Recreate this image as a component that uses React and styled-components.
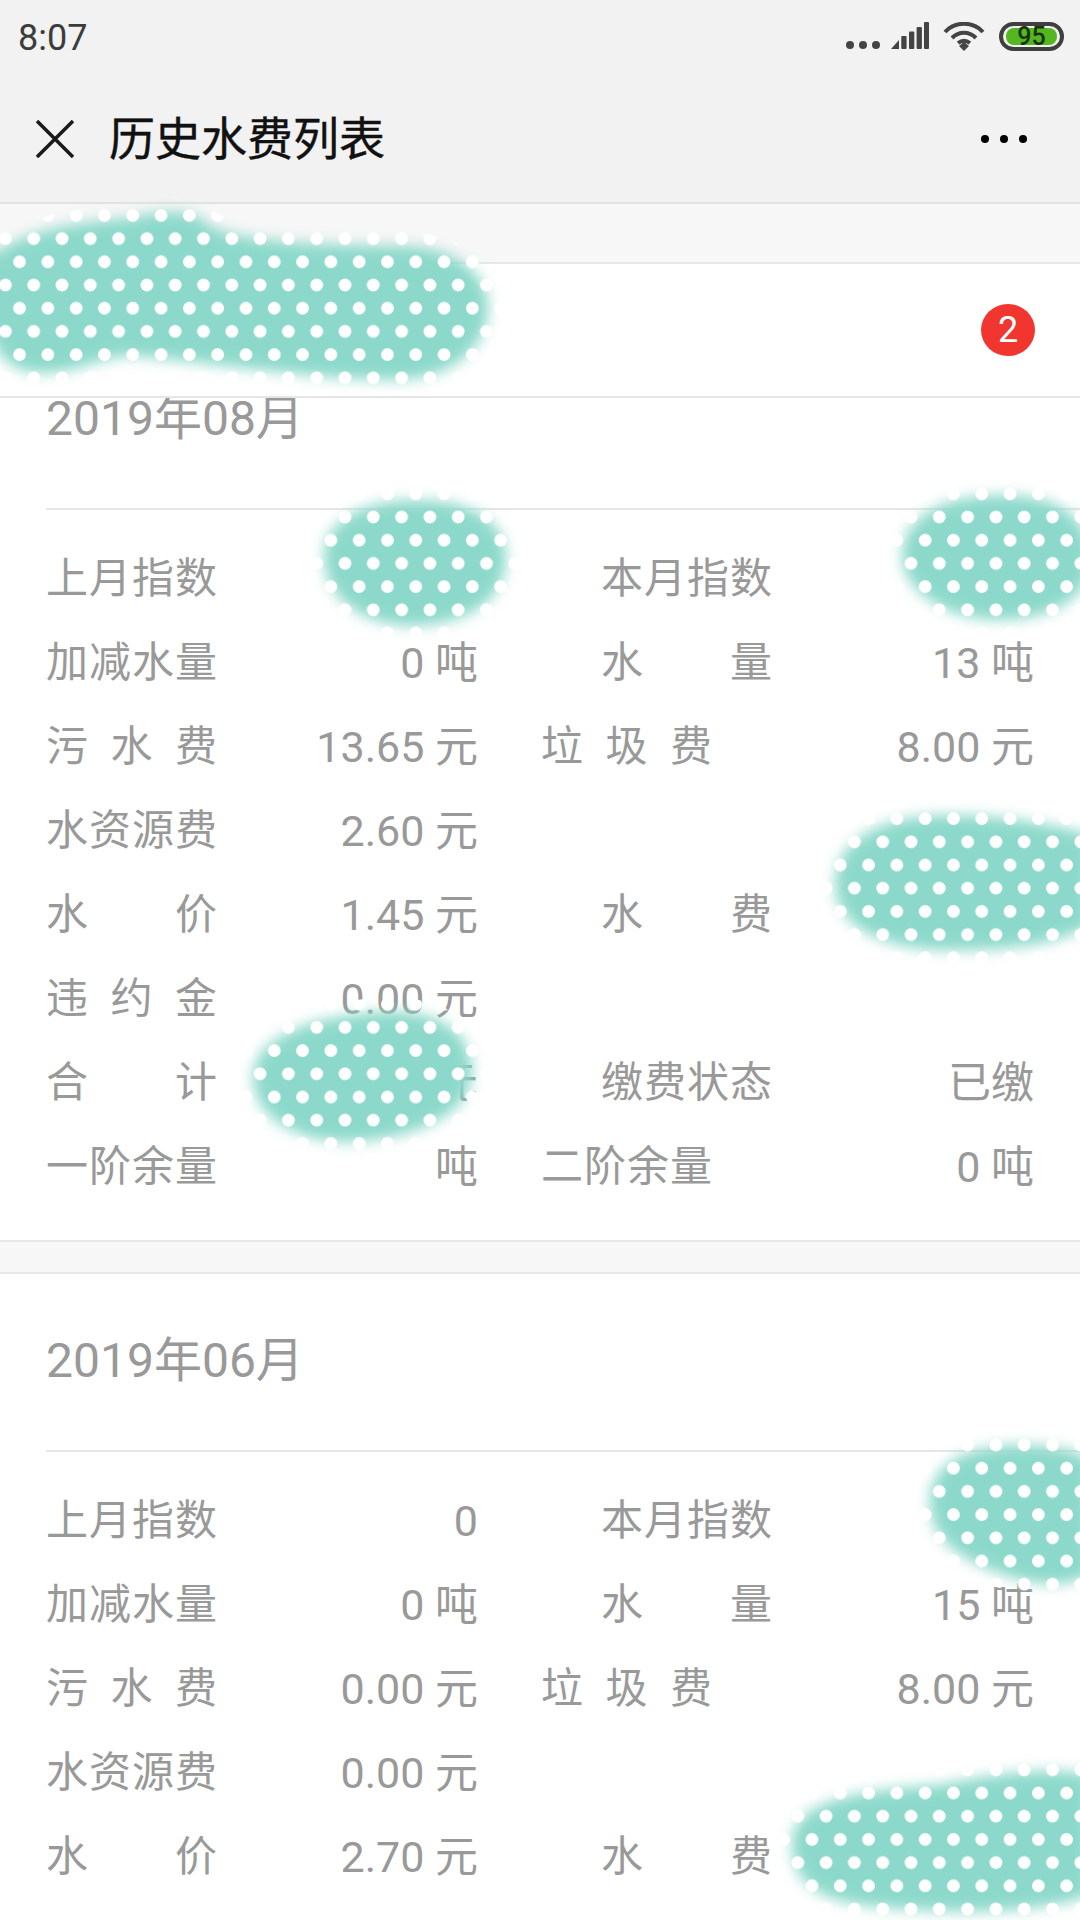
import React from "react";
import styled, { createGlobalStyle } from "styled-components";

const GlobalStyle = createGlobalStyle`
  html, body {
    margin: 0;
    padding: 0;
    width: 1080px;
    height: 1920px;
    overflow: hidden;
    background: #fff;
    font-family: Roboto, "Noto Sans CJK SC", sans-serif;
  }
`;

const cards = [
  {
    date: "2019年08月",
    rows: [
      ["上月指数", "", "本月指数", "", false],
      ["加减水量", "0 吨", "水量", "13 吨", false],
      ["污水费", "13.65 元", "垃圾费", "8.00 元", true],
      ["水资源费", "2.60 元", "", "", false],
      ["水价", "1.45 元", "水费", "", false],
      ["违约金", "0.00 元", "", "", false],
      ["合计", "元", "缴费状态", "已缴", false],
      ["一阶余量", "吨", "二阶余量", "0 吨", true],
    ],
  },
  {
    date: "2019年06月",
    rows: [
      ["上月指数", "0", "本月指数", "", false],
      ["加减水量", "0 吨", "水量", "15 吨", false],
      ["污水费", "0.00 元", "垃圾费", "8.00 元", true],
      ["水资源费", "0.00 元", "", "", false],
      ["水价", "2.70 元", "水费", "", false],
    ],
  },
];

const blobs = [
  "M-20 262 C30 225 90 222 130 218 C165 210 190 208 205 222 C225 240 300 245 400 246 C450 246 482 268 488 300 C492 345 455 378 400 380 C330 382 210 362 130 356 C100 356 70 378 30 372 C0 366 -20 340 -20 262 Z",
  "M324 560 C322 520 365 500 415 500 C470 500 506 520 506 557 C506 600 470 622 420 626 C365 628 326 600 324 560 Z",
  "M902 555 C902 520 940 495 1000 495 C1050 495 1090 510 1090 560 C1090 605 1040 620 1000 620 C945 620 902 590 902 555 Z",
  "M835 885 C835 840 880 815 950 815 C1000 815 1060 825 1090 835 L1090 925 C1060 945 1000 952 940 950 C880 948 835 925 835 885 Z",
  "M253 1077 C253 1042 300 1017 380 1012 C440 1009 472 1032 472 1072 C472 1112 420 1139 350 1142 C295 1142 253 1117 253 1077 Z",
  "M930 1510 C925 1465 965 1445 1020 1445 C1050 1445 1080 1450 1090 1460 L1090 1575 C1060 1590 1030 1585 990 1570 C955 1555 935 1540 930 1510 Z",
  "M792 1845 C790 1800 860 1790 940 1785 C990 1775 1050 1765 1090 1775 L1090 1895 C1040 1915 940 1915 860 1905 C815 1898 792 1880 792 1845 Z",
];

function App() {
  return (
    <Page>
      <GlobalStyle />
      <Top>
        <StatusBar>
          <Clock>8:07</Clock>
          <StatusIcons>
            <MoreDots width="34" height="10" viewBox="0 0 34 10">
              <circle cx="4" cy="5" r="4" fill="#444" />
              <circle cx="17" cy="5" r="4" fill="#444" />
              <circle cx="30" cy="5" r="4" fill="#444" />
            </MoreDots>
            <svg width="38" height="28" viewBox="0 0 38 28" fill="#444">
              <path d="M0 27 L8 18 V27 Z" />
              <rect x="10.3" y="14" width="5.3" height="13" rx="1" />
              <rect x="18" y="9.5" width="5.3" height="17.5" rx="1" />
              <rect x="25.6" y="5" width="5.3" height="22" rx="1" />
              <rect x="33" y="0" width="5" height="27" rx="1" />
            </svg>
            <svg width="42" height="29" viewBox="0 0 42 29" fill="none" stroke="#444" strokeWidth="4">
              <path d="M2 10 C12 -1 30 -1 40 10" />
              <path d="M9 16 C16 9 26 9 33 16" />
              <path d="M15 21 C19 18 23 18 27 21" />
              <path d="M16 24 L21 20 L26 24 L21 29 Z" fill="#444" stroke="none" />
            </svg>
            <Battery>
              <BatteryFill>95</BatteryFill>
            </Battery>
          </StatusIcons>
        </StatusBar>
        <NavBar>
          <svg width="38" height="38" viewBox="0 0 38 38" fill="none" stroke="#1a1a1a" strokeWidth="3.5">
            <path d="M1 1 L37 37 M37 1 L1 37" />
          </svg>
          <Title>历史水费列表</Title>
          <svg width="48" height="10" viewBox="0 0 48 10">
            <circle cx="5" cy="5" r="4" fill="#000" />
            <circle cx="24" cy="5" r="4" fill="#000" />
            <circle cx="43" cy="5" r="4" fill="#000" />
          </svg>
        </NavBar>
      </Top>
      <Band />
      <TabHeader>
        <Badge>2</Badge>
      </TabHeader>
      <ScrollArea>
        <CardList>
          {cards.map((card) => (
            <Card key={card.date}>
              <DateRow>{card.date}</DateRow>
              <Rows>
                {card.rows.map((row, i) => (
                  <Row key={i}>
                    <Cell>
                      <Label>{row[0]}</Label>
                      <Value>{row[1]}</Value>
                    </Cell>
                    <Cell>
                      {row[2] && <Label $inset={!row[4]}>{row[2]}</Label>}
                      <Value>{row[3]}</Value>
                    </Cell>
                  </Row>
                ))}
              </Rows>
            </Card>
          ))}
        </CardList>
      </ScrollArea>
      <Scribble width="1080" height="1920" viewBox="0 0 1080 1920">
        <defs>
          <filter id="soft" x="-10%" y="-10%" width="120%" height="120%">
            <feGaussianBlur stdDeviation="7" />
          </filter>
          <pattern id="dots" x="5.4" y="6.6" width="28.3" height="46.4" patternUnits="userSpaceOnUse">
            <circle cx="0" cy="0" r="6.4" fill="#fff" />
            <circle cx="28.3" cy="0" r="6.4" fill="#fff" />
            <circle cx="0" cy="46.4" r="6.4" fill="#fff" />
            <circle cx="28.3" cy="46.4" r="6.4" fill="#fff" />
            <circle cx="14.15" cy="23.2" r="6.4" fill="#fff" />
          </pattern>
          <mask id="spread" maskUnits="userSpaceOnUse" x="0" y="0" width="1080" height="1920">
            {blobs.map((d) => (
              <path key={d} d={d} fill="#fff" stroke="#fff" strokeWidth="28" />
            ))}
          </mask>
        </defs>
        <g filter="url(#soft)" fill="#8cd9cb">
          {blobs.map((d) => (
            <path key={d} d={d} />
          ))}
        </g>
        <rect width="1080" height="1920" fill="url(#dots)" mask="url(#spread)" />
      </Scribble>
    </Page>
  );
}

const Page = styled.div`
  position: relative;
  width: 1080px;
  height: 1920px;
  display: flex;
  flex-direction: column;
  overflow: hidden;
  background: #fff;
`;

const Top = styled.header`
  height: 202px;
  flex: none;
  display: flex;
  flex-direction: column;
  background: #f2f2f2;
  border-bottom: 2px solid #e2e2e2;
`;

const StatusBar = styled.div`
  height: 72px;
  display: flex;
  align-items: center;
  justify-content: space-between;
  padding: 0 16px 0 18px;
`;

const Clock = styled.span`
  padding-top: 3px;
  font-size: 36px;
  color: #3c3c3c;
`;

const StatusIcons = styled.div`
  display: flex;
  align-items: flex-start;
  gap: 14px;
`;

const MoreDots = styled.svg`
  margin-top: 18px;
  margin-right: -3px;
`;

const Battery = styled.div`
  width: 65px;
  height: 29px;
  box-sizing: border-box;
  border: 4px solid #3f3f3f;
  border-radius: 15px;
  padding: 2px 3px;
  display: flex;
`;

const BatteryFill = styled.div`
  flex: 1;
  background: #55b71f;
  border-radius: 8px;
  color: #17330b;
  font-size: 25px;
  font-weight: 500;
  line-height: 17px;
  text-align: center;
`;

const NavBar = styled.div`
  flex: 1;
  display: flex;
  align-items: center;
  padding: 3px 52px 0 36px;
`;

const Title = styled.h1`
  flex: 1;
  margin: 0 0 8px 35px;
  font-size: 46px;
  font-weight: 400;
  color: #111;
  font-family: "Noto Sans CJK SC", sans-serif;
  -webkit-text-stroke: 0.4px #111;
`;

const Band = styled.div`
  height: 58px;
  flex: none;
  background: #f7f7f7;
  border-bottom: 2px solid #e8e8e8;
`;

const TabHeader = styled.div`
  height: 132px;
  flex: none;
  display: flex;
  align-items: center;
  justify-content: flex-end;
  padding-right: 45px;
  background: #fff;
  border-bottom: 2px solid #e6e6e6;
`;

const Badge = styled.span`
  width: 54px;
  height: 52px;
  border-radius: 50%;
  background: #f1362f;
  color: #fff;
  font-size: 36px;
  display: flex;
  align-items: center;
  justify-content: center;
`;

const ScrollArea = styled.div`
  flex: 1;
  overflow: hidden;
  background: #f7f7f7;
`;

const CardList = styled.div`
  margin-top: -68px;
  display: flex;
  flex-direction: column;
  gap: 30px;
`;

const Card = styled.section`
  background: #fff;
  border-top: 2px solid #e8e8e8;
  border-bottom: 2px solid #e8e8e8;
  padding-bottom: 31px;
`;

const DateRow = styled.div`
  height: 178px;
  box-sizing: border-box;
  margin-left: 46px;
  padding-top: 56px;
  border-bottom: 2px solid #e6e6e6;
  color: #999;
  font-size: 48px;
  line-height: 62px;
`;

const Rows = styled.div`
  padding: 27px 46px 0;
  display: flex;
  flex-direction: column;
`;

const Row = styled.div`
  height: 84px;
  display: grid;
  grid-template-columns: 432px 493px;
  column-gap: 63px;
  align-items: center;
  color: #999;
  font-size: 43px;
  line-height: 50px;
`;

const Cell = styled.div`
  display: flex;
  align-items: center;
  min-height: 50px;
`;

const Label = styled.span`
  width: 171px;
  flex: none;
  margin-left: ${(p) => (p.$inset ? "60px" : "0")};
  font-size: 42px;
  text-align: justify;
  text-align-last: justify;
`;

const Value = styled.span`
  flex: 1;
  text-align: right;
`;

const Scribble = styled.svg`
  position: absolute;
  left: 0;
  top: 0;
  pointer-events: none;
`;

export default App;
